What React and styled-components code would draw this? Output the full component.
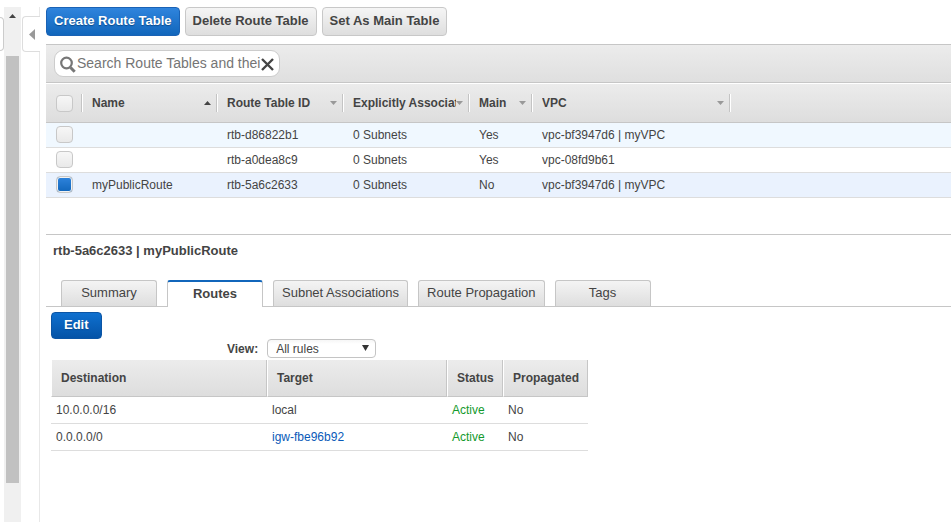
import React, { useState } from "react";
import styled, { createGlobalStyle, css } from "styled-components";

const GlobalStyle = createGlobalStyle`
  *, *::before, *::after { box-sizing: border-box; }
  body {
    margin: 0;
    background: #fff;
    color: #444;
    font: 12px/16px "Liberation Sans", Arial, sans-serif;
  }
  button, input, select { font-family: inherit; color: inherit; margin: 0; }
`;

const Page = styled.div`
  display: flex;
  min-height: 100vh;
`;

const NavEdge = styled.div`
  flex: none;
  width: 4px;
  height: 34px;
  margin-top: 17px;
  border: 1px solid #ccc;
  border-left: 0;
  border-radius: 0 4px 4px 0;
`;

const ScrollTrack = styled.div`
  flex: none;
  display: grid;
  grid-template-rows: 49px 11fr 1fr;
  justify-items: center;
  width: 17px;
  margin-top: 7px;
  background: #f0f0f0;

  svg { margin-top: 7px; }
`;

const ScrollThumb = styled.div`
  width: 13px;
  background: #c1c1c1;
`;

const Splitter = styled.div`
  flex: none;
  display: flex;
  flex-direction: column;
  width: 19px;
  margin: 7px 6px 0 0;
`;

const SplitLine = styled.div`
  flex: ${(p) => (p.$grow ? 1 : "none")};
  height: 9px;
  border-right: 1px solid #e8e8e8;
`;

const CollapseButton = styled.button`
  display: flex;
  align-items: center;
  justify-content: flex-start;
  height: 36px;
  margin-left: 1px;
  padding: 0 0 0 6px;
  border: 1px solid #ddd;
  border-right: 0;
  border-radius: 4px 0 0 4px;
  background: #fff;
`;

const Main = styled.main`
  flex: 1;
  min-width: 0;
`;

const Toolbar = styled.div`
  display: flex;
  gap: 5px;
  padding: 7px 0 8px;
`;

const primary = css`
  border-color: #1a62b5;
  background: linear-gradient(#2f84dd, #1166bb);
  color: #fff;
  text-shadow: 0 1px 1px #0a4a8c;
`;

const Button = styled.button`
  height: 29px;
  padding: 0 7px 2px;
  border: 1px solid #c8c8c8;
  border-radius: 4px;
  background: linear-gradient(#f5f5f5, #dedede);
  font-size: 13px;
  font-weight: bold;
  white-space: nowrap;
  ${(p) => p.$primary && primary}
`;

const EditButton = styled(Button)`
  height: 27px;
  padding: 0 12px 2px;
  border-color: #0b55a5;
  background: linear-gradient(#0f70cf, #0453a7);
`;

const SearchBar = styled.div`
  display: flex;
  padding: 5px 8px;
  border-top: 1px solid #c6c6c6;
  border-bottom: 1px solid #c6c6c6;
  background: linear-gradient(#ececec, #dfdfdf);
`;

const SearchBox = styled.label`
  display: flex;
  align-items: center;
  width: 226px;
  height: 27px;
  padding: 0 5px;
  border: 1px solid #ccc;
  border-radius: 9px;
  background: #fff;
`;

const SearchInput = styled.input.attrs({ type: "text" })`
  flex: 1;
  min-width: 0;
  margin: 0 1px;
  padding: 0 0 2px;
  border: 0;
  outline: 0;
  background: none;
  font-size: 14px;
  &::placeholder { color: #757575; opacity: 1; }
`;

const ClearButton = styled.button`
  display: flex;
  padding: 2px 0 0;
  border: 0;
  background: none;
`;

const SearchIcon = styled.svg`
  flex: none;
  margin-top: 2px;
`;

const Grid = styled.table`
  width: 100%;
  border-collapse: separate;
  border-spacing: 0;
  table-layout: fixed;
`;

const Col = styled.col`
  width: ${(p) => (p.$w ? `${p.$w}px` : "auto")};
`;

const HeadRow = styled.tr`
  background: linear-gradient(#ececec, #dddddd);
`;

const HeadCell = styled.th`
  height: 40px;
  padding: 0;
  border-top: 1px solid #fff;
  border-bottom: 1px solid #c6c6c6;
  background: ${(p) =>
    p.$last ? "none" : "linear-gradient(90deg, #c4c4c4 50%, #fff 50%) right center / 2px 18px no-repeat"};
  text-align: left;
`;

const HeadInner = styled.div`
  display: flex;
  align-items: center;
  padding: 0 7px 0 9px;
  svg { flex: none; }
`;

const HeadText = styled.span`
  flex: 1;
  min-width: 0;
  overflow: hidden;
  white-space: nowrap;
`;

const BodyRow = styled.tr`
  background: ${(p) => p.$bg};
`;

const Cell = styled.td`
  height: 25px;
  padding: 0 9px;
  border-bottom: 1px solid #ddd;
  white-space: nowrap;
`;

const Check = styled.input.attrs({ type: "checkbox" })`
  appearance: none;
  display: block;
  width: 17px;
  height: 17px;
  margin: 0 0 0 10px;
  border: 1px solid #c8c8c8;
  border-radius: 4px;
  background: linear-gradient(#f7f7f7, #e9e9e9);
  &:checked {
    background: linear-gradient(#2f84dd, #1166bb);
    box-shadow: inset 0 0 0 1px #f2f2f2;
  }
`;

const CheckCell = styled(Cell)`
  padding: 0 0 2px;
`;

const Details = styled.section`
  margin-top: 36px;
  border-top: 1px solid #c6c6c6;
`;

const Title = styled.h2`
  margin: 0;
  padding: 8px 6px 21px 7px;
  font-size: 13px;
  line-height: 16px;
`;

const Tabs = styled.div`
  display: flex;
  gap: 10px;
  padding-left: 15px;
  border-bottom: 1px solid #c6c6c6;
`;

const Tab = styled.button`
  min-width: 96px;
  height: 26px;
  padding: 0 8px 2px;
  border: 1px solid #c6c6c6;
  border-bottom: 0;
  border-radius: 3px 3px 0 0;
  background: linear-gradient(#f4f4f4, #dedede);
  font-size: 13px;
  white-space: nowrap;
  ${(p) =>
    p.$active &&
    css`
      height: 27px;
      margin-bottom: -1px;
      border-top: 2px solid #1166bb;
      background: #fff;
      font-weight: bold;
    `}
`;

const Panel = styled.div`
  padding: 5px;
`;

const Filter = styled.div`
  display: flex;
  align-items: center;
  gap: 9px;
  padding: 0 0 2px 176px;
  label { font-weight: bold; }
`;

const SelectWrap = styled.div`
  display: grid;
  align-items: center;
  width: 109px;
  > * { grid-area: 1 / 1; }
  svg { justify-self: end; margin: 0 7px 2px 0; pointer-events: none; }
`;

const Select = styled.select`
  appearance: none;
  width: 100%;
  height: 19px;
  padding: 0 20px 0 8px;
  border: 1px solid #c4c4c4;
  border-radius: 4px;
  background: linear-gradient(#f6f6f6, #fff 4px);
  font-size: 12px;
`;

const RouteTable = styled(Grid)`
  width: 537px;
  max-width: 100%;
`;

const RouteHead = styled.th`
  height: 37px;
  padding: 0 0 0 9px;
  border-left: 1px solid #fff;
  border-right: 1px solid #c6c6c6;
  border-bottom: 1px solid #c6c6c6;
  text-align: left;
`;

const RouteCell = styled(Cell)`
  height: 27px;
  padding: 0 5px;
  color: ${(p) => (p.$ok ? "#139a2c" : "inherit")};
`;

const Link = styled.a`
  color: #0a5ab8;
  text-decoration: none;
`;

const Caret = ({ up, dark }) => (
  <svg width="7" height="4" viewBox="0 0 7 4" aria-hidden="true">
    <path d={up ? "M0 4 3.5 0 7 4z" : "M0 0h7L3.5 4z"} fill={dark ? "#444" : "#999"} />
  </svg>
);

const columns = [
  { label: "Name", width: 135, sorted: true },
  { label: "Route Table ID", width: 126 },
  { label: "Explicitly Associated", width: 126 },
  { label: "Main", width: 63 },
  { label: "VPC", width: 198 },
];

const tables = [
  { name: "", id: "rtb-d86822b1", subnets: "0 Subnets", main: "Yes", vpc: "vpc-bf3947d6 | myVPC", bg: "#f0f8ff" },
  { name: "", id: "rtb-a0dea8c9", subnets: "0 Subnets", main: "Yes", vpc: "vpc-08fd9b61", bg: "#fff" },
  { name: "myPublicRoute", id: "rtb-5a6c2633", subnets: "0 Subnets", main: "No", vpc: "vpc-bf3947d6 | myVPC", bg: "#eaf2fe" },
];

const routes = [
  { destination: "10.0.0.0/16", target: "local" },
  { destination: "0.0.0.0/0", target: "igw-fbe96b92", link: true },
];

const tabs = ["Summary", "Routes", "Subnet Associations", "Route Propagation", "Tags"];

export default function App() {
  const [selected, setSelected] = useState("rtb-5a6c2633");
  const [tab, setTab] = useState("Routes");
  const [query, setQuery] = useState("");

  return (
    <Page>
      <GlobalStyle />
      <NavEdge />
      <ScrollTrack>
        <Caret up dark />
        <ScrollThumb />
      </ScrollTrack>
      <Splitter>
        <SplitLine />
        <CollapseButton aria-label="Collapse navigation">
          <svg width="6" height="11" viewBox="0 0 6 11" aria-hidden="true">
            <path d="M6 0v11L0 5.5z" fill="#999" />
          </svg>
        </CollapseButton>
        <SplitLine $grow />
      </Splitter>
      <Main>
        <Toolbar>
          <Button $primary>Create Route Table</Button>
          <Button>Delete Route Table</Button>
          <Button>Set As Main Table</Button>
        </Toolbar>
        <SearchBar>
          <SearchBox>
            <SearchIcon width="16" height="17" viewBox="0 0 16 17" fill="none" stroke="#777" aria-hidden="true">
              <circle cx="6.5" cy="7" r="5.3" strokeWidth="2.2" />
              <path d="m10.5 11.5 4.2 4.2" strokeWidth="3" />
            </SearchIcon>
            <SearchInput
              aria-label="Search route tables"
              placeholder="Search Route Tables and their"
              value={query}
              onChange={(e) => setQuery(e.target.value)}
            />
            <ClearButton type="button" aria-label="Clear search" onClick={() => setQuery("")}>
              <svg width="13" height="13" viewBox="0 0 13 13" stroke="#444" strokeWidth="2.4" aria-hidden="true">
                <path d="m1 1 11 11M12 1 1 12" />
              </svg>
            </ClearButton>
          </SearchBox>
        </SearchBar>

        <Grid>
          <colgroup>
            <Col $w={37} />
            {columns.map((c) => <Col key={c.label} $w={c.width} />)}
            <Col />
          </colgroup>
          <thead>
            <HeadRow>
              <HeadCell><Check aria-label="Select all" /></HeadCell>
              {columns.map((c) => (
                <HeadCell key={c.label}>
                  <HeadInner>
                    <HeadText>{c.label}</HeadText>
                    <Caret up={c.sorted} dark={c.sorted} />
                  </HeadInner>
                </HeadCell>
              ))}
              <HeadCell $last />
            </HeadRow>
          </thead>
          <tbody>
            {tables.map((t) => (
              <BodyRow key={t.id} $bg={t.bg}>
                <CheckCell>
                  <Check aria-label={t.id} checked={selected === t.id} onChange={() => setSelected(t.id)} />
                </CheckCell>
                <Cell>{t.name}</Cell>
                <Cell>{t.id}</Cell>
                <Cell>{t.subnets}</Cell>
                <Cell>{t.main}</Cell>
                <Cell>{t.vpc}</Cell>
                <Cell />
              </BodyRow>
            ))}
          </tbody>
        </Grid>

        <Details>
          <Title>rtb-5a6c2633 | myPublicRoute</Title>
          <Tabs role="tablist">
            {tabs.map((t) => (
              <Tab key={t} role="tab" aria-selected={t === tab} $active={t === tab} onClick={() => setTab(t)}>
                {t}
              </Tab>
            ))}
          </Tabs>
          <Panel>
            <EditButton $primary>Edit</EditButton>
            <Filter>
              <label htmlFor="view">View:</label>
              <SelectWrap>
                <Select id="view"><option>All rules</option></Select>
                <svg width="7" height="6" viewBox="0 0 7 6" aria-hidden="true">
                  <path d="M0 0h7L3.5 6z" fill="#333" />
                </svg>
              </SelectWrap>
            </Filter>
            <RouteTable>
              <colgroup>
                <Col $w={216} />
                <Col $w={180} />
                <Col $w={56} />
                <Col $w={85} />
              </colgroup>
              <thead>
                <HeadRow>
                  {["Destination", "Target", "Status", "Propagated"].map((h) => <RouteHead key={h}>{h}</RouteHead>)}
                </HeadRow>
              </thead>
              <tbody>
                {routes.map((r) => (
                  <tr key={r.destination}>
                    <RouteCell>{r.destination}</RouteCell>
                    <RouteCell>{r.link ? <Link href="#igw">{r.target}</Link> : r.target}</RouteCell>
                    <RouteCell $ok>Active</RouteCell>
                    <RouteCell>No</RouteCell>
                  </tr>
                ))}
              </tbody>
            </RouteTable>
          </Panel>
        </Details>
      </Main>
    </Page>
  );
}
